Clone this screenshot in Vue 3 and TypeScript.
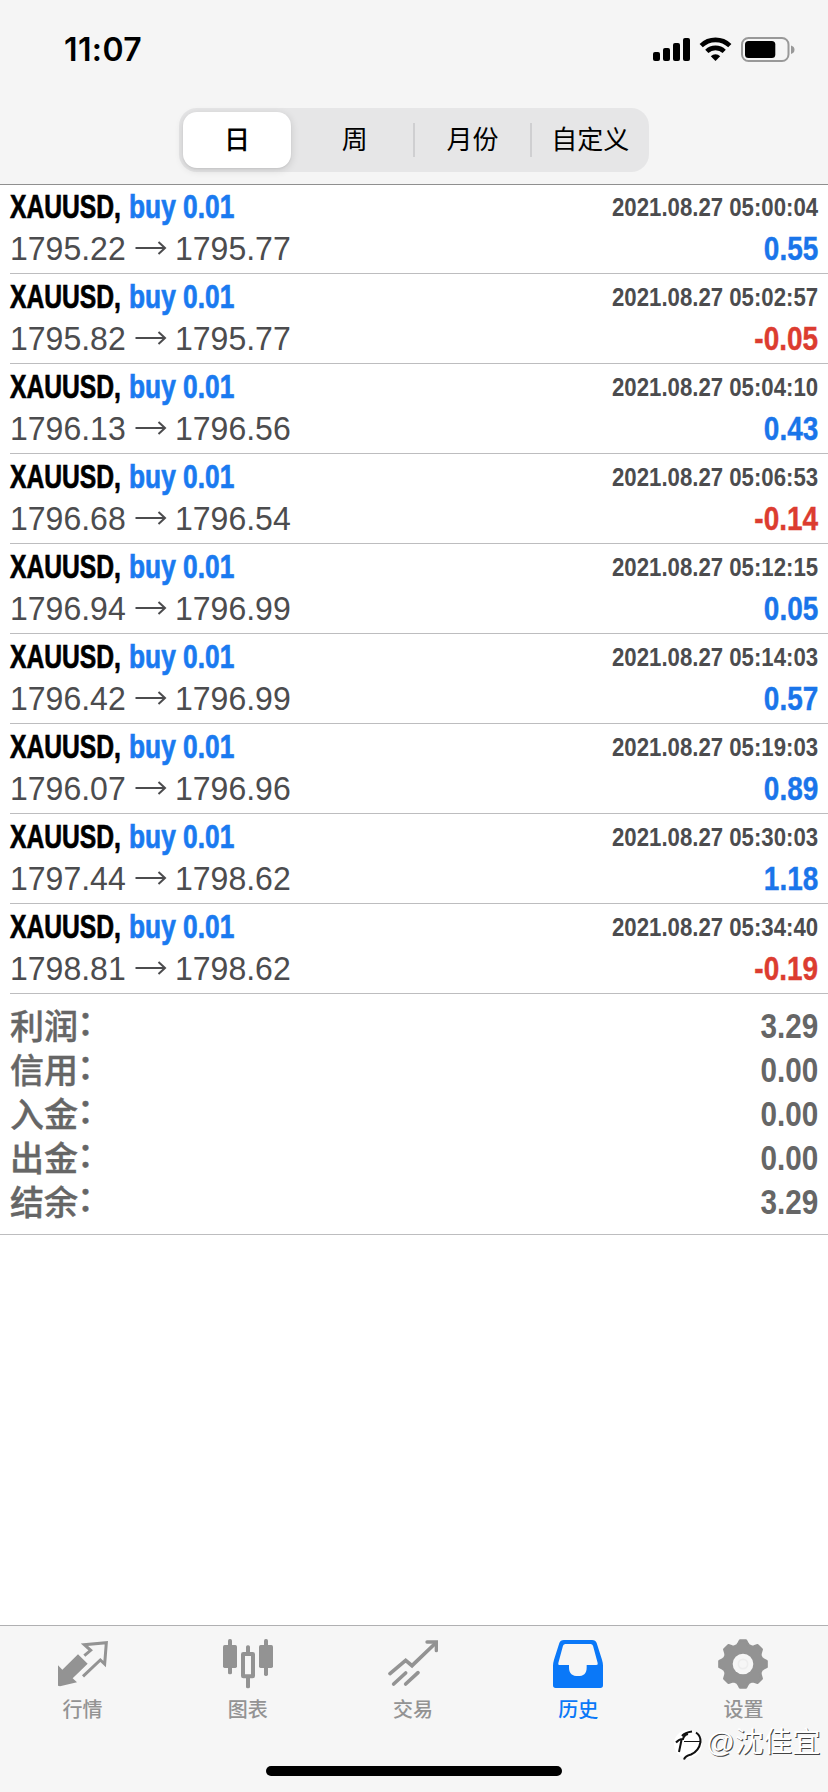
<script setup lang="ts">
import { ref } from 'vue'

interface Deal {
  open: string
  close: string
  time: string
  profit: string
}

const periods: string[] = ['日', '周', '月份', '自定义']
const period = ref(0)

const deals: Deal[] = [
  { open: '1795.22', close: '1795.77', time: '05:00:04', profit: '0.55' },
  { open: '1795.82', close: '1795.77', time: '05:02:57', profit: '-0.05' },
  { open: '1796.13', close: '1796.56', time: '05:04:10', profit: '0.43' },
  { open: '1796.68', close: '1796.54', time: '05:06:53', profit: '-0.14' },
  { open: '1796.94', close: '1796.99', time: '05:12:15', profit: '0.05' },
  { open: '1796.42', close: '1796.99', time: '05:14:03', profit: '0.57' },
  { open: '1796.07', close: '1796.96', time: '05:19:03', profit: '0.89' },
  { open: '1797.44', close: '1798.62', time: '05:30:03', profit: '1.18' },
  { open: '1798.81', close: '1798.62', time: '05:34:40', profit: '-0.19' },
]

const totals: { label: string; value: string }[] = [
  { label: '利润', value: '3.29' },
  { label: '信用', value: '0.00' },
  { label: '入金', value: '0.00' },
  { label: '出金', value: '0.00' },
  { label: '结余', value: '3.29' },
]

const tabs: string[] = ['行情', '图表', '交易', '历史', '设置']
const activeTab = ref(3)

// Eight-toothed cog outline around (75, 75)
function cogPoints(): string {
  const points: string[] = []
  const corners: [number, number][] = [[-18, 58], [-13, 62], [-7, 71], [7, 71], [13, 62], [18, 58]]
  for (let tooth = 0; tooth < 8; tooth++) {
    for (const [offset, radius] of corners) {
      const angle = ((tooth * 45 + offset) * Math.PI) / 180
      points.push(`${(75 + radius * Math.sin(angle)).toFixed(1)},${(75 - radius * Math.cos(angle)).toFixed(1)}`)
    }
  }
  return points.join(' ')
}
const cog = cogPoints()
</script>

<template>
  <div class="screen">
    <header class="top">
      <div class="status">
        <span class="clock">11:07</span>
        <svg class="status-icons" width="144" height="28" viewBox="652 36 144 28">
          <rect x="653" y="52" width="7" height="9" rx="2" />
          <rect x="663" y="48" width="7" height="13" rx="2" />
          <rect x="673" y="43" width="7" height="18" rx="2" />
          <rect x="683" y="38" width="7" height="23" rx="2" />
          <g fill="none" stroke="#000" stroke-width="4.6">
            <path d="M701.2 45.6A20.6 20.6 0 0 1 729.8 45.6" />
            <path d="M706.8 51.4A12.6 12.6 0 0 1 724.2 51.4" />
          </g>
          <path d="M715.5 61L710.8 56.2A6.8 6.8 0 0 1 720.2 56.2Z" />
          <rect x="742" y="38" width="46.5" height="23" rx="6.5" fill="none" stroke="#999" stroke-width="2" />
          <rect x="745" y="41" width="30.3" height="17" rx="3.5" />
          <path d="M791 45.5Q794.5 46.500 794.500 49.700T791 54Z" fill="#999" />
        </svg>
      </div>
      <nav class="segments">
        <button
          v-for="(name, i) in periods"
          :key="name"
          class="segment"
          :class="{ selected: i === period, divided: i > 1 }"
          @click="period = i"
        >
          {{ name }}
        </button>
      </nav>
    </header>

    <main class="content">
      <ul class="deals">
        <li v-for="deal in deals" :key="deal.time" class="deal">
          <div class="line">
            <div class="title"><span class="symbol">XAUUSD,</span><span class="side">buy 0.01</span></div>
            <span class="time">2021.08.27 {{ deal.time }}</span>
          </div>
          <div class="line">
            <div class="prices">
              <span class="price">{{ deal.open }}</span>
              <svg class="arrow" width="32" height="16" viewBox="0 0 32 16">
                <path d="M0.500 8H30M23.500 2L30 8L23.500 14" />
              </svg>
              <span class="price">{{ deal.close }}</span>
            </div>
            <span class="profit" :class="{ loss: deal.profit.startsWith('-') }">{{ deal.profit }}</span>
          </div>
        </li>
      </ul>
      <dl class="totals">
        <div v-for="total in totals" :key="total.label" class="total">
          <dt>{{ total.label }}<span class="colon">：</span></dt>
          <dd>{{ total.value }}</dd>
        </div>
      </dl>
    </main>

    <footer class="bottom">
      <nav class="tabs">
        <button
          v-for="(name, i) in tabs"
          :key="name"
          class="tab"
          :class="{ active: i === activeTab }"
          @click="activeTab = i"
        >
          <svg class="tab-icon" width="50" height="50" viewBox="0 0 150 150">
            <template v-if="i === 0">
              <path d="M0 79L13 92L60 46L89 74L44 118L57 130L6 142L0 140Z" />
              <path class="stroke" stroke-width="9" d="M79 50L98 34L79 17L145 11L140 75L127 63L75 112" />
            </template>
            <template v-else-if="i === 1">
              <rect x="0" y="18" width="42" height="69" rx="5" />
              <rect x="15" y="0" width="12" height="106" rx="5" />
              <rect x="69" y="19" width="12" height="26" rx="5" />
              <rect x="69" y="112" width="12" height="36" rx="5" />
              <rect class="stroke" x="60" y="45" width="30" height="67" rx="1" stroke-width="12" />
              <rect x="108" y="18" width="42" height="69" rx="5" />
              <rect x="123" y="0" width="12" height="111" rx="5" />
            </template>
            <template v-else-if="i === 2">
              <path class="stroke round" stroke-width="11" d="M6 104L53 64L72 80L143 12" />
              <path class="stroke round" stroke-width="10" d="M117 9H145V35" />
              <path class="stroke round" stroke-width="11" d="M17 135L53 102M53 135L90 101" />
            </template>
            <path
              v-else-if="i === 3"
              fill-rule="evenodd"
              d="M33 3H117Q128 3 131 12L147 62Q150 72 150 80V139Q150 147 142 147H8Q0 147 0 139V80Q0 72 3 62L19 12Q22 3 33 3ZM37 15Q32 15 30 20L16 72Q14 78 19 78H48V86C48 104 59 111 75 111S101 104 101 86V78H130Q136 78 134 72L120 20Q118 15 113 15Z"
            />
            <template v-else>
              <polygon :points="cog" stroke="currentColor" stroke-width="8" stroke-linejoin="round" />
              <circle cx="75" cy="75" r="31" fill="#f6f6f6" />
              <circle cx="75" cy="75" r="14" fill="none" stroke="#ededed" stroke-width="5" />
            </template>
          </svg>
          <span class="tab-label">{{ name }}</span>
        </button>
      </nav>
      <div class="home-bar"></div>
    </footer>

    <div class="signature">
      <svg width="30" height="32" viewBox="0 0 30 32">
        <circle cx="15" cy="16" r="14" fill="#fff" />
        <g fill="none" stroke="#111" stroke-width="2">
          <path d="M9 8Q12 4.500 19 3.500" />
          <path d="M3 14.500Q6 11 10 11Q11 7 15 6" />
          <path d="M8.500 12L6 24" />
          <path d="M11 13.500H28" stroke-width="1" />
          <path d="M23 4.500Q28 8 27.500 14Q26 23 18 26.500Q12 28 11 31.500" />
        </g>
      </svg>
      <span>@沈佳宜</span>
    </div>
  </div>
</template>

<style>
body {
  margin: 0;
  background: #fff;
}
</style>

<style scoped>
.screen {
  position: relative;
  display: flex;
  flex-direction: column;
  width: 828px;
  height: 1792px;
  overflow: hidden;
  background: #fff;
  font-family: 'Liberation Sans', 'Noto Sans CJK SC', sans-serif;
}

button {
  margin: 0;
  padding: 0;
  border: 0;
  background: none;
  font-family: inherit;
  color: inherit;
}

.top {
  position: relative;
  z-index: 1;
  height: 184px;
  background: #f5f5f5;
  box-shadow: 0 1px 0 #8f8f8f;
}

.status {
  display: flex;
  justify-content: space-between;
  height: 108px;
  padding: 0 32px 0 64px;
  box-sizing: border-box;
}

.clock {
  margin-top: 30px;
  height: 40px;
  line-height: 40px;
  font-family: Inter, sans-serif;
  font-size: 32px;
  font-weight: 600;
  letter-spacing: 0.4px;
}

.status-icons {
  margin-top: 36px;
}

.segments {
  display: flex;
  width: 470px;
  height: 64px;
  margin-left: 179px;
  padding: 4px 0;
  box-sizing: border-box;
  border-radius: 18px;
  background: #e6e6e7;
}

.segment {
  position: relative;
  flex: 1;
  height: 56px;
  font-size: 26px;
  line-height: 55px;
}

.segment.selected {
  flex: 0 0 108px;
  margin: 0 5px 0 4px;
  border-radius: 14px;
  background: #fff;
  font-weight: 500;
  box-shadow: 0 2px 8px rgba(0, 0, 0, 0.14), 0 1px 2px rgba(0, 0, 0, 0.06);
}

.segment.divided::before {
  content: '';
  position: absolute;
  left: -1px;
  top: 11px;
  width: 2px;
  height: 34px;
  background: #cfcfd1;
}

.content {
  flex: 1;
}

.deals {
  margin: 0;
  padding: 0 0 0 10px;
  list-style: none;
}

.deal {
  height: 90px;
  padding: 2px 10px 0 0;
  box-sizing: border-box;
  border-bottom: 1px solid #bdbdbf;
}

.line {
  display: flex;
  justify-content: space-between;
  height: 41px;
  line-height: 41px;
  white-space: nowrap;
}

.title {
  display: flex;
  font-size: 33px;
  font-weight: 700;
  -webkit-text-stroke: 0.7px currentColor;
}

.symbol {
  width: 118.5px;
  transform: scaleX(0.747);
  transform-origin: left;
}

.side {
  color: #1a7af0;
  transform: scaleX(0.797);
  transform-origin: left;
}

.time {
  padding-top: 1px;
  font-size: 25px;
  font-weight: 700;
  color: #4c4c4e;
  transform: scaleX(0.888);
  transform-origin: right;
}

.prices {
  display: flex;
  align-items: center;
  padding-top: 1px;
  font-size: 33px;
  color: #4c4c4e;
}

.price {
  width: 115px;
  transform: scaleX(0.97);
  transform-origin: left;
}

.arrow {
  margin: 0 8px 0 10px;
  fill: none;
  stroke: #4c4c4e;
  stroke-width: 2;
}

.profit {
  padding-top: 2px;
  font-size: 32.5px;
  font-weight: 700;
  color: #1a75ea;
  transform: scaleX(0.86);
  transform-origin: right;
  -webkit-text-stroke: 0.4px currentColor;
}

.profit.loss {
  color: #dc3c30;
}

.totals {
  height: 241px;
  margin: 0;
  padding: 10px 10px 0;
  box-sizing: border-box;
  border-bottom: 1px solid #bdbdbf;
  color: #666;
}

.total {
  display: flex;
  justify-content: space-between;
  height: 44px;
  line-height: 44px;
}

.total dt {
  margin-top: 1px;
  font-size: 34px;
  font-weight: 500;
  -webkit-text-stroke: 0.4px currentColor;
}

.colon {
  position: relative;
  top: -4px;
  left: -1px;
}

.total dd {
  margin: 0;
  font-size: 34.5px;
  font-weight: 700;
  transform: scaleX(0.86);
  transform-origin: right;
}

.bottom {
  height: 167px;
  box-sizing: border-box;
  border-top: 1px solid #b0b0b2;
  background: #f6f6f6;
}

.tabs {
  display: flex;
  height: 140px;
  padding: 13px 2px 0 0;
  box-sizing: border-box;
}

.tab {
  display: flex;
  flex: 1;
  flex-direction: column;
  align-items: center;
  color: #939393;
}

.tab.active {
  color: #0a78f8;
}

.tab-icon {
  fill: currentColor;
}

.stroke {
  fill: none;
  stroke: currentColor;
}

.round {
  stroke-linecap: round;
}

.tab-label {
  margin-top: 6px;
  font-size: 20px;
  font-weight: 500;
  line-height: 30px;
}

.home-bar {
  width: 296px;
  height: 10px;
  margin: 0 auto;
  border-radius: 5px;
  background: #000;
}

.signature {
  position: absolute;
  left: 673px;
  top: 1728px;
  display: flex;
  align-items: center;
  gap: 3px;
  height: 32px;
  font-size: 28.5px;
  line-height: 32px;
  white-space: nowrap;
  color: #fff;
}

.signature span {
  margin-top: -5px;
  text-shadow: 1px 1px 0 #444;
}
</style>
